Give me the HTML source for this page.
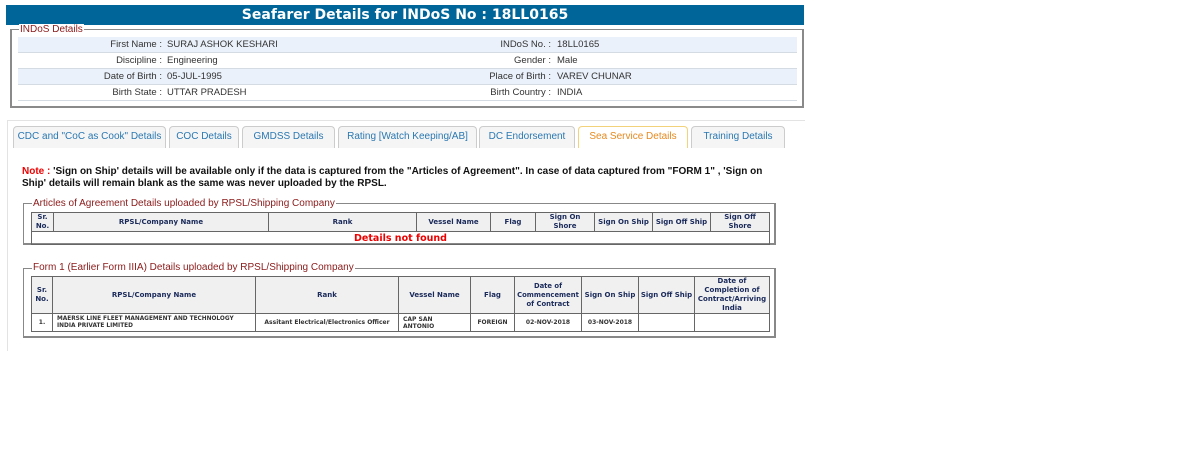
<!DOCTYPE html>
<html><head><meta charset="utf-8"><style>
*{box-sizing:border-box;margin:0;padding:0}
body{width:1185px;height:456px;background:#fff;position:relative;overflow:hidden;font-family:"Liberation Sans",Arial,sans-serif}
.a{position:absolute}
.hdr{left:6px;top:5px;width:798px;height:20px;background:#006699;color:#fff;font:bold 14px "DejaVu Sans",Verdana,sans-serif;text-align:center;line-height:20px}
.fs{border:2px solid #8a8a8a;border-top-width:1px}
.lg{background:#fff;color:#8b1a1a;font-size:10px;padding:0 1px;line-height:11px}
.row{left:18px;width:779px;height:16px;border-bottom:1px solid #d4dbe3;font-size:9.5px;color:#333;line-height:15px}
.row.s{background:#eaf1fa}
.row span{position:absolute;white-space:nowrap}
.l{text-align:right}
.panel{left:7px;top:120px;width:798px;height:231px;border:1px solid #e3e3e3;border-right:none;border-bottom:none}
.tab{top:126px;height:22px;background:#f5f5f5;border:1px solid #ccc;border-bottom:none;border-radius:4px 4px 0 0;color:#2a78b2;font-size:10px;text-align:center;line-height:20px;white-space:nowrap}
.tab.on{background:#fff;border-color:#f2d27a;color:#e8891d}
.note{left:22px;top:166px;font:bold 10px "Liberation Sans",Arial,sans-serif;color:#111;line-height:12px;white-space:nowrap}
table{position:absolute;border-collapse:collapse;table-layout:fixed;font-family:"DejaVu Sans",Verdana,sans-serif}
td,th{border:1px solid #666;font-size:7px;line-height:9px;text-align:center;padding:0;white-space:nowrap;overflow:hidden}
th{background:#f0f0f0;color:#1a2a5a;font-weight:bold}
td{color:#333;font-weight:bold;font-size:6px}
.box{border:1px solid #888;border-width:1px 2px 2px 1px}
</style></head><body>
<div class="a hdr">Seafarer Details for INDoS No : 18LL0165</div>
<div class="a fs" style="left:10px;top:29px;width:794px;height:79px"></div>
<div class="a lg" style="left:19px;top:24px">INDoS Details</div>
<div class="a row s" style="top:37px"><span class="l" style="right:635px">First Name :</span><span style="left:149px">SURAJ ASHOK KESHARI</span><span class="l" style="right:246px">INDoS No. :</span><span style="left:539px">18LL0165</span></div>
<div class="a row" style="top:53px"><span class="l" style="right:635px">Discipline :</span><span style="left:149px">Engineering</span><span class="l" style="right:246px">Gender :</span><span style="left:539px">Male</span></div>
<div class="a row s" style="top:69px"><span class="l" style="right:635px">Date of Birth :</span><span style="left:149px">05-JUL-1995</span><span class="l" style="right:246px">Place of Birth :</span><span style="left:539px">VAREV CHUNAR</span></div>
<div class="a row" style="top:85px"><span class="l" style="right:635px">Birth State :</span><span style="left:149px">UTTAR PRADESH</span><span class="l" style="right:246px">Birth Country :</span><span style="left:539px">INDIA</span></div>

<div class="a panel"></div>
<div class="a tab" style="left:13px;width:153px">CDC and "CoC as Cook" Details</div>
<div class="a tab" style="left:169px;width:70px">COC Details</div>
<div class="a tab" style="left:242px;width:93px">GMDSS Details</div>
<div class="a tab" style="left:338px;width:139px">Rating [Watch Keeping/AB]</div>
<div class="a tab" style="left:479px;width:96px">DC Endorsement</div>
<div class="a tab on" style="left:578px;width:110px">Sea Service Details</div>
<div class="a tab" style="left:691px;width:94px">Training Details</div>

<div class="a note"><span style="color:#e00">Note :</span> 'Sign on Ship' details will be available only if the data is captured from the "Articles of Agreement". In case of data captured from "FORM 1" , 'Sign on<br>Ship' details will remain blank as the same was never uploaded by the RPSL.</div>

<div class="a box" style="left:23px;top:203px;width:753px;height:42px"></div>
<div class="a lg" style="left:32px;top:198px">Articles of Agreement Details uploaded by RPSL/Shipping Company</div>
<table style="left:31px;top:212px;width:738px">
<colgroup><col style="width:22px"><col style="width:215px"><col style="width:148px"><col style="width:74px"><col style="width:45px"><col style="width:59px"><col style="width:58px"><col style="width:58px"><col style="width:59px"></colgroup>
<tr style="height:19px"><th>Sr.<br>No.</th><th>RPSL/Company Name</th><th>Rank</th><th>Vessel Name</th><th>Flag</th><th>Sign On<br>Shore</th><th>Sign On Ship</th><th>Sign Off Ship</th><th>Sign Off<br>Shore</th></tr>
<tr style="height:13px"><td colspan="9" style="color:#e00;font-size:9.5px;line-height:11px">Details not found</td></tr>
</table>

<div class="a box" style="left:23px;top:268px;width:753px;height:70px"></div>
<div class="a lg" style="left:32px;top:262px">Form 1 (Earlier Form IIIA) Details uploaded by RPSL/Shipping Company</div>
<table style="left:31px;top:276px;width:738px">
<colgroup><col style="width:21px"><col style="width:203px"><col style="width:143px"><col style="width:72px"><col style="width:44px"><col style="width:67px"><col style="width:57px"><col style="width:56px"><col style="width:75px"></colgroup>
<tr style="height:37px"><th>Sr.<br>No.</th><th>RPSL/Company Name</th><th>Rank</th><th>Vessel Name</th><th>Flag</th><th style="font-size:6.8px">Date of<br>Commencement<br>of Contract</th><th>Sign On Ship</th><th>Sign Off Ship</th><th>Date of<br>Completion of<br>Contract/Arriving<br>India</th></tr>
<tr style="height:18px"><td>1.</td><td style="text-align:left;padding-left:4px;line-height:7px;font-size:5.8px">MAERSK LINE FLEET MANAGEMENT AND TECHNOLOGY<br>INDIA PRIVATE LIMITED</td><td>Assitant Electrical/Electronics Officer</td><td style="text-align:left;padding-left:4px;line-height:7px">CAP SAN<br>ANTONIO</td><td>FOREIGN</td><td>02-NOV-2018</td><td>03-NOV-2018</td><td></td><td></td></tr>
</table>
</body></html>
